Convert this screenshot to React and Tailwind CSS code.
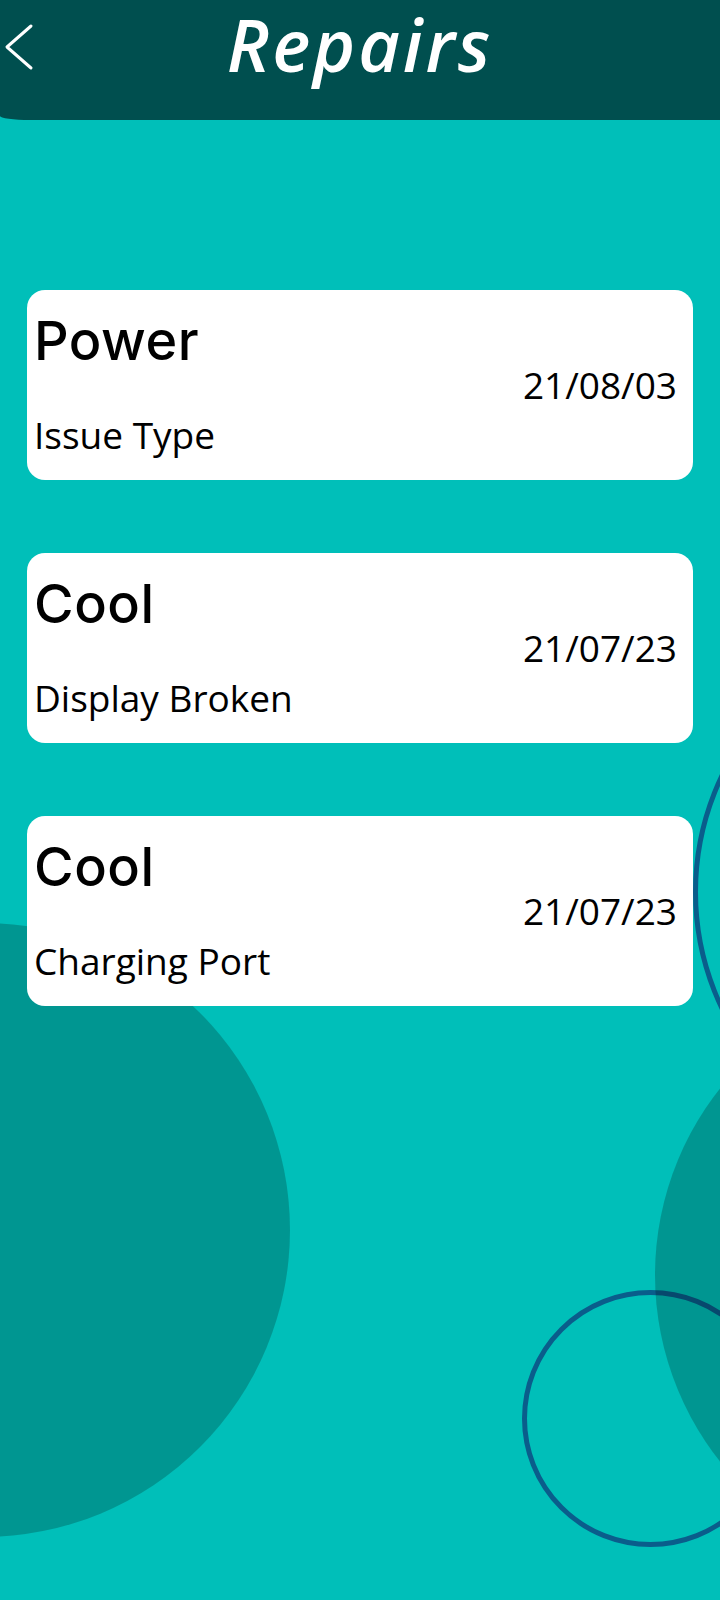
import React from 'react';

const repairs = [
  { title: 'Power', issue: 'Issue Type', date: '21/08/03' },
  { title: 'Cool', issue: 'Display Broken', date: '21/07/23' },
  { title: 'Cool', issue: 'Charging Port', date: '21/07/23' },
];

function BackChevron() {
  return (
    <svg width="40" height="80" viewBox="0 0 40 80" fill="none">
      <path d="M31 26 L7 47 L31 68" stroke="white" strokeWidth="3" strokeLinecap="round" strokeLinejoin="round" />
    </svg>
  );
}

function RepairCard({ item }) {
  return (
    <div className="flex h-[190px] justify-between rounded-[18px] bg-white pr-4">
      <div className="flex flex-col pl-[7px] pt-6">
        <p className="text-[54px] font-medium leading-none tracking-[0.01em] text-black" style={{ fontFamily: 'Inter, sans-serif' }}>
          {item.title}
        </p>
        <p className="mt-[48px] text-[37px] leading-none text-black" style={{ fontFamily: '"Open Sans", sans-serif' }}>
          {item.issue}
        </p>
      </div>
      <p className="pt-[76px] text-[37px] leading-none text-black" style={{ fontFamily: '"Open Sans", sans-serif' }}>
        {item.date}
      </p>
    </div>
  );
}

export default function App() {
  return (
    <div className="relative h-[1600px] w-[720px] overflow-hidden bg-[#00bfb9]">
      {/* background shapes */}
      <div className="absolute left-[693px] top-[621px] h-[542px] w-[542px] rounded-full border-[5px] border-[#0a5d8b]" />
      <div className="absolute left-[522px] top-[1290px] h-[257px] w-[257px] rounded-full border-[5px] border-[#0a5d8b]" />
      <div className="absolute left-[-324px] top-[923px] h-[614px] w-[614px] rounded-full bg-black/[0.21]" />
      <div className="absolute left-[655px] top-[975px] h-[600px] w-[600px] rounded-full bg-black/[0.21]" />

      <div className="relative z-10">
        <header className="grid h-[120px] grid-cols-[1fr_auto_1fr] rounded-bl-[30px_4px] bg-[#004f4f]">
          <div className="flex items-start">
            <BackChevron />
          </div>
          <h1
            className="px-3 pt-[3px] text-[72px] font-semibold italic leading-[1.15] tracking-[0.04em] text-white"
            style={{ fontFamily: '"Open Sans", sans-serif' }}
          >
            Repairs
          </h1>
          <div />
        </header>

        <div className="mx-[27px] mt-[170px] flex flex-col gap-[73px]">
          {repairs.map((r, i) => (
            <RepairCard key={i} item={r} />
          ))}
        </div>
      </div>
    </div>
  );
}
